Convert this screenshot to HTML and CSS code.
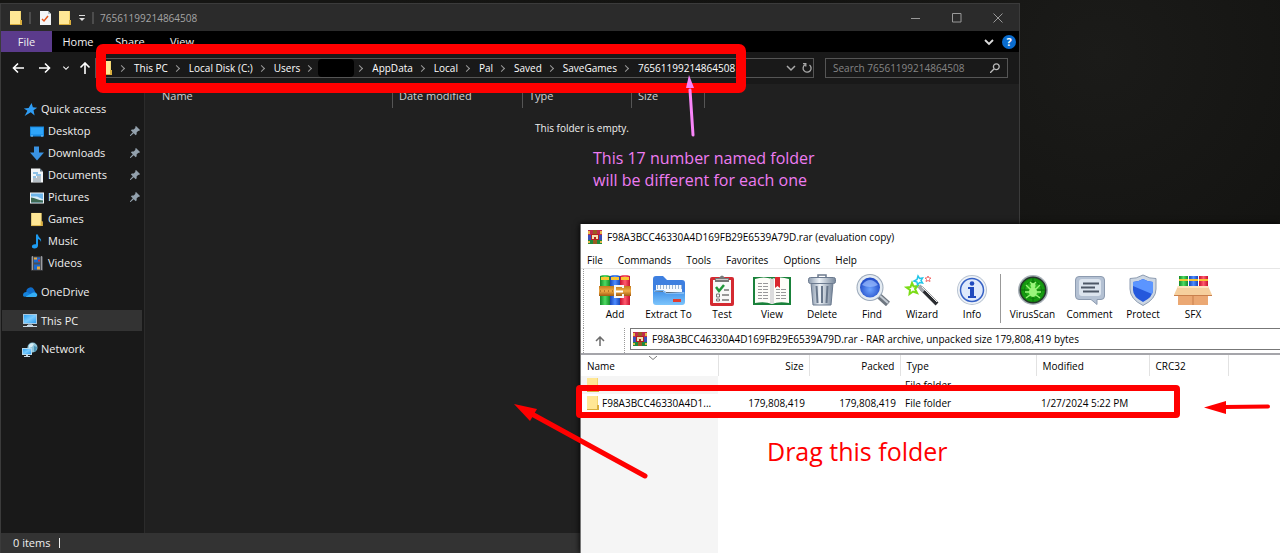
FILE: index.html
```
<!DOCTYPE html>
<html lang="en">
<head>
<meta charset="UTF-8">
<title>Copy the save folder</title>
<link rel="stylesheet" href="styles.css">
</head>
<body>

<!-- shared icons -->
<svg class="defs" aria-hidden="true">
	<defs>
		<linearGradient id="g-blue" x1="0" y1="0" x2="0" y2="1"><stop offset="0" stop-color="#3f8fe8"/><stop offset="1" stop-color="#7cc4fb"/></linearGradient>
		<linearGradient id="g-steel" x1="0" y1="0" x2="1" y2="0"><stop offset="0" stop-color="#8a99ac"/><stop offset=".4" stop-color="#eef3f8"/><stop offset="1" stop-color="#77879b"/></linearGradient>
		<linearGradient id="g-screen" x1="0" y1="0" x2="1" y2="1"><stop offset="0" stop-color="#2fa4f5"/><stop offset=".5" stop-color="#7accff"/><stop offset="1" stop-color="#2b9cf0"/></linearGradient>
		<linearGradient id="g-red" x1="0" y1="0" x2="1" y2="0"><stop offset="0" stop-color="#c8102e"/><stop offset=".5" stop-color="#ff5a6e"/><stop offset="1" stop-color="#c8102e"/></linearGradient>
		<linearGradient id="g-green" x1="0" y1="0" x2="1" y2="0"><stop offset="0" stop-color="#128a28"/><stop offset=".5" stop-color="#4fdb62"/><stop offset="1" stop-color="#128a28"/></linearGradient>
		<linearGradient id="g-book" x1="0" y1="0" x2="1" y2="0"><stop offset="0" stop-color="#1745b8"/><stop offset=".5" stop-color="#4e8cff"/><stop offset="1" stop-color="#1745b8"/></linearGradient>
		<linearGradient id="g-belt" x1="0" y1="0" x2="0" y2="1"><stop offset="0" stop-color="#c47a1e"/><stop offset=".5" stop-color="#f0ab45"/><stop offset="1" stop-color="#a35a10"/></linearGradient>
		<radialGradient id="g-lens" cx=".5" cy=".6" r=".6"><stop offset="0" stop-color="#6ea4ff"/><stop offset="1" stop-color="#1c46c4"/></radialGradient>
		<radialGradient id="g-radar"><stop offset="0" stop-color="#3ed62b"/><stop offset="1" stop-color="#0f8f0c"/></radialGradient>
	</defs>
	<symbol id="folder" viewBox="0 0 14 16"><path fill="#f3d672" d="M1 1h11v9h1v5H1z"/><path fill="#ffe795" d="M1 1h10v14H1z"/><path fill="#d9ae3d" d="M11 10h2v5h-2zM1 14h11v1H1z"/></symbol>
	<symbol id="pin" viewBox="0 0 10 10"><path fill="#93a1ad" d="M6 0l4 4-1 1-.7-.3L6.600 6.400l.1 1.900-1 .9-2-2L.6 9.900 0 9.900 0 9.300l2.800-3L.9 4.400l.9-1 1.900.1 1.800-1.800L5.100 1z"/></symbol>
	<symbol id="rar" viewBox="0 0 16 16"><path fill="#c02a4c" d="M1 1h14v5H1z"/><path fill="#3b4eb8" d="M1 6h14v5H1z"/><path fill="#1f8a3a" d="M1 11h14v4H1z"/><path fill="#e7b84c" d="M1 2h2v3H1zM13 2h2v3h-2zM1 12h2v2H1zM13 12h2v2h-2z"/><path fill="#9a5a22" d="M6 1h4v14H6z"/><path fill="#b5201f" d="M4 5h8v6H4z"/><path fill="#f3dfae" d="M5 6h6v4H9V8H7v2H5z"/></symbol>
	<symbol id="pc" viewBox="0 0 16 15"><path fill="#a9c8de" d="M1 1h14v10H1z"/><path fill="url(#g-screen)" d="M2 2h12v8H2z"/><path fill="#7e93a3" d="M6 11h4v1H6z"/><path fill="#c8d8e4" d="M1 13h14v1H1zM5 12h6v1H5z"/></symbol>
</svg>

<div class="desktop">

<div class="window explorer">
	<div class="ex-title">
		<svg class="i14"><use href="#folder"/></svg>
		<span class="bar"></span>
		<svg class="i14 check" viewBox="0 0 14 16"><path fill="#f4f6f8" d="M2 1h8l3 3v11H2z"/><path fill="#b7c3cc" d="M10 1v3h3z"/><path fill="none" stroke="#e2561e" stroke-width="1.500" d="M4 9l2 2 4-5"/></svg>
		<svg class="i14"><use href="#folder"/></svg>
		<svg class="i8" viewBox="0 0 8 8"><path stroke="#ddd" d="M1 1.500h6"/><path fill="#ddd" d="M1 4h6L4 7z"/></svg>
		<span class="bar"></span>
		<span class="ex-name">76561199214864508</span>
		<button class="win-btn" aria-label="Minimize"><svg viewBox="0 0 10 10"><path d="M0 5.500h9"/></svg></button>
		<button class="win-btn" aria-label="Maximize"><svg viewBox="0 0 10 10"><path d="M.5.5h8.500v8.500H.5z"/></svg></button>
		<button class="win-btn" aria-label="Close"><svg viewBox="0 0 10 10"><path d="M.5.500l9 9M9.500.5l-9 9"/></svg></button>
	</div>
	<div class="ex-tabs">
		<button class="file">File</button>
		<button>Home</button>
		<button>Share</button>
		<button>View</button>
		<svg class="expand" viewBox="0 0 10 10"><path fill="none" stroke="#ddd" stroke-width="1.800" d="M1 3l4 4 4-4"/></svg>
		<button class="help" aria-label="Help">?</button>
	</div>
	<div class="ex-nav">
		<button aria-label="Back"><svg viewBox="0 0 12 12"><path d="M6 1.500L1.500 6 6 10.500M1.500 6H12"/></svg></button>
		<button class="forward" aria-label="Forward"><svg viewBox="0 0 12 12"><path d="M6 1.500L10.500 6 6 10.500M10.500 6H0"/></svg></button>
		<button class="recent" aria-label="Recent locations"><svg viewBox="0 0 12 12"><path d="M2 4l4 4 4-4"/></svg></button>
		<button class="up" aria-label="Up"><svg viewBox="0 0 12 12"><path d="M1.500 5.500L6 1l4.500 4.500M6 1v11"/></svg></button>
		<div class="address">
			<svg class="i14"><use href="#folder"/></svg>
			<ol class="crumbs">
				<li><a href="#">This PC</a></li>
				<li><a href="#">Local Disk (C:)</a></li>
				<li><a href="#">Users</a></li>
				<li class="hidden-name"><span></span></li>
				<li><a href="#">AppData</a></li>
				<li><a href="#">Local</a></li>
				<li><a href="#">Pal</a></li>
				<li><a href="#">Saved</a></li>
				<li><a href="#">SaveGames</a></li>
				<li><a href="#">76561199214864508</a></li>
			</ol>
			<svg class="i10" viewBox="0 0 10 10"><path fill="none" stroke="#aaa" stroke-width="1.500" d="M1 3l4 4 4-4"/></svg>
			<svg class="i10 refresh" viewBox="0 0 10 10"><path fill="none" stroke="#aaa" stroke-width="1.300" d="M3 1.800A4 4 0 1 0 7.500 2M1 .7h2.800v2.800"/></svg>
		</div>
		<label class="search">
			<input type="text" placeholder="Search 76561199214864508" aria-label="Search">
			<svg class="i10" viewBox="0 0 10 10"><path fill="none" stroke="#bbb" stroke-width="1.300" d="M0 10l4-4"/><circle cx="6.300" cy="3.700" r="2.900" fill="none" stroke="#bbb" stroke-width="1.300"/></svg>
		</label>
	</div>
	<div class="ex-body">
		<nav class="side">
			<a href="#" class="top"><svg viewBox="0 0 14 14"><path fill="#2f9df4" d="M8.500 1l1.200 4 4 .3-3.400 2.400 1 4.800-3.600-2.900L2 13l2.600-4.800L1.200 6l4.500-.5z"/></svg>Quick access</a>
			<a href="#"><svg viewBox="0 0 16 14"><path fill="#1688e0" d="M1 2h14v10H1z"/><path fill="#2ea5fa" d="M2 3h12v7H2z"/><path fill="#8fd1ff" d="M2 11h2v1H2zM12 11h2v1h-2z"/></svg>Desktop<svg class="pin"><use href="#pin"/></svg></a>
			<a href="#"><svg viewBox="0 0 16 14"><path fill="#3a93e3" d="M5 0h5v6h5l-7 8-7-8h4z"/></svg>Downloads<svg class="pin"><use href="#pin"/></svg></a>
			<a href="#"><svg viewBox="0 0 16 14"><path fill="#f2f5f7" d="M2 0h9l3 3v11H2z"/><path fill="#5e7485" d="M11 0v3h3z"/><path stroke="#2e8fd6" d="M4 4.500h5M7 6.500h5M4 8.500h3"/><path stroke="#7b8a96" d="M8 8.500h4M4 10.500h8M4 12.500h8"/></svg>Documents<svg class="pin"><use href="#pin"/></svg></a>
			<a href="#"><svg viewBox="0 0 16 14"><path fill="#f2f5f7" d="M1 2h14v11H1z"/><path fill="#6db5ea" d="M2 3h12v9H2z"/><path fill="#d8ecf8" d="M2 6h6l6 3v1H2z"/><path fill="#3f6a54" d="M2 7c4 0 7 3 12 3v2H2z"/></svg>Pictures<svg class="pin"><use href="#pin"/></svg></a>
			<a href="#"><svg><use href="#folder"/></svg>Games</a>
			<a href="#"><svg viewBox="0 0 16 14"><path fill="#1e9bf0" d="M7 0h2c0 3 4 3.500 3 7.500-.5-2-1.500-2.500-3-3V11c0 2-1.500 3-3.500 3S2.500 13 3 11.500 5 9.300 7 9.800z"/></svg>Music</a>
			<a href="#"><svg viewBox="0 0 16 14"><path fill="#4c4f55" d="M2 0h12v14H2z"/><path fill="#1b6ad0" d="M5 1h6v5H5zM5 8h6v5H5z"/><path fill="#e9a73c" d="M5 1h3v2H5zM8 10h3v3H8z"/><path fill="#c33" d="M9 3h2v2H9z"/><path stroke="#eee" stroke-dasharray="1 1" d="M3.500 0v14M12.500 0v14"/></svg>Videos</a>
			<a href="#" class="top group"><svg viewBox="0 0 16 14"><path fill="#0f6cc9" d="M5 8a4 4 0 0 1 7-4l3 6H3z"/><path fill="#1482dc" d="M1 9.500C1 7 4 6 6 7l6 4H3C2 11.500 1 11 1 9.500z"/><path fill="#34aef5" d="M3 11.500L11 7c3-.5 5 1.500 4 3.500-.4.800-1 1-2 1z"/></svg>OneDrive</a>
			<a href="#" class="top group active"><svg><use href="#pc"/></svg>This PC</a>
			<a href="#" class="top group"><svg viewBox="0 0 16 15"><circle cx="10.500" cy="5.500" r="5" fill="#8cc3d8"/><path fill="#d5edf4" d="M7 3c2-2 4-2 5-1l-2 3-3 1z"/><path fill="#4c94b6" d="M12 4l3 1-1 4-2 1z"/><path fill="#b6d8ec" d="M0 6h10v7H0z"/><path fill="url(#g-screen)" d="M1 7h8v5H1z"/><path fill="#c8d8e4" d="M2 14h6v1H2zM4 13h2v1H4z"/></svg>Network</a>
		</nav>
		<main class="files">
			<div class="cols">
				<span class="c-name">Name</span>
				<span class="c-date">Date modified</span>
				<span class="c-type">Type</span>
				<span class="c-size">Size</span>
			</div>
			<p class="empty">This folder is empty.</p>
		</main>
	</div>
	<div class="status"><span>0 items</span></div>
</div>

<div class="window winrar">
	<div class="wr-title"><svg class="i16"><use href="#rar"/></svg>F98A3BCC46330A4D169FB29E6539A79D.rar (evaluation copy)</div>
	<div class="wr-menu">
		<button>File</button>
		<button>Commands</button>
		<button>Tools</button>
		<button>Favorites</button>
		<button>Options</button>
		<button>Help</button>
	</div>
	<div class="wr-tools">
		<button><svg viewBox="0 0 38 32"><path fill="url(#g-green)" d="M4 2q5-2 10 0v29H4z"/><path fill="url(#g-book)" d="M14 2q5-2 10 0v29H14z"/><path fill="url(#g-red)" d="M24 2q5-2 10 0v29H24z"/><path stroke="#f7c531" stroke-width="3" d="M5 4.500h8M15 4.500h8M25 4.500h8"/><path fill="url(#g-belt)" d="M3 12h32v10H3z"/><path stroke="#8a4b0c" stroke-dasharray="1 3" d="M4 17h14"/><path fill="none" stroke="#f5f5f5" stroke-width="2" d="M27 14v-2h-8v11h8v-3"/><path stroke="#fff" stroke-width="2" d="M20 17.500h7"/></svg>Add</button>
		<button class="wide"><svg viewBox="0 0 38 32"><path fill="#3d7fe0" d="M3 27V5q0-3 3-3h7l4 4h15q3 0 3 3v18z"/><path fill="#f5f9ff" d="M6 11h26v8H6z"/><path stroke="#9ab4d2" stroke-dasharray="1 2" stroke-width="4" d="M7 13h25"/><path fill="url(#g-blue)" d="M3 16h10l3 2h19v10q0 3-3 3H6q-3 0-3-3z"/><path stroke="#b5dcff" d="M4 17h9l3 2h18"/><path fill="#e33b2e" d="M23 25h8v3h-8z"/></svg>Extract To</button>
		<button><svg viewBox="0 0 38 32"><rect x="7" y="3" width="24" height="29" rx="2" fill="#d42a31"/><path fill="#f8f8f8" d="M10 6h18v23H10z"/><path fill="#777" d="M12 4h4q3-5 6 0h4v4H12z"/><path fill="#ccc" d="M13 5h12v1H13z"/><path fill="none" stroke="#20963a" stroke-width="2.500" d="M13 13l3 4 5-6"/><path stroke="#777" stroke-width="1.500" d="M21 16h5M19 21h7M19 26h7"/><path fill="none" stroke="#777" d="M13.500 20h3v3h-3zM13.500 25h3v2h-3z"/></svg>Test</button>
		<button><svg viewBox="0 0 38 32"><path fill="#19813a" d="M0 3h38v28H0z"/><path fill="#fdfdf8" d="M2 5q9-3 17 0 8-3 17 0v24q-10-2-17 1-7-3-17-1z"/><path fill="#ddd" d="M17 4l2 1 2-1v25l-2 1-2-1z"/><path stroke="#999" stroke-dasharray="4 1 6 1" d="M5 9.500h10M5 12.500h10M5 15.500h10M5 18.500h10M5 21.500h10M5 24.500h10M23 15.500h10M23 18.500h10M23 21.500h10M23 24.500h10"/><path fill="#d9272e" d="M22 3h5v11l-2.500-2L22 14z"/></svg>View</button>
		<button><svg viewBox="0 0 38 32"><path fill="none" stroke="#6d7b8e" stroke-width="1.500" d="M15 4V1h8v3"/><path fill="url(#g-steel)" stroke="#6b7a8f" d="M8 9h22l-2 22H10z"/><path stroke="#68778b" stroke-width="2" d="M13.500 12l1 17M19 12v17M24.500 12l-1 17"/><rect x="5.500" y="3.500" width="27" height="6" rx="2" fill="url(#g-steel)" stroke="#6b7a8f"/></svg>Delete</button>
		<button><svg viewBox="0 0 38 32"><path stroke="#6e7680" stroke-width="6" d="M25 21l10 9"/><path stroke="#c3cad2" stroke-width="2" d="M25 20l10 9"/><circle cx="17" cy="13.500" r="13.500" fill="#9ba9ba"/><circle cx="17" cy="13.500" r="12.500" fill="#e4ebf2"/><circle cx="17" cy="13.500" r="10" fill="url(#g-lens)"/><path fill="#9dbdff" opacity=".7" d="M9 11q8-10 16 0-8 4-16 0z"/></svg>Find</button>
		<button><svg viewBox="0 0 38 32"><path stroke="#2b2d31" stroke-width="4" d="M18 14l16 16"/><path stroke="#a3a7ae" stroke-width="4" d="M16 12l5 5"/><path stroke="#eee" d="M19 13l15 15"/><path fill="none" stroke="#7bdc16" stroke-width="2" d="M9 9l1.500 3.500 4-.5-2.500 3 2 4-4-1.500-3.500 2.500.5-4-3.500-2.500 4-.5z"/><path fill="none" stroke="#22c5e8" stroke-width="1.500" d="M15 2l1.500 2.500 3-.5-1.500 2.500 1.500 2.500-3-.5-2 2.500-.5-3-3-1 3-1.500z"/><path fill="none" stroke="#f06a6a" d="M25 2l1 2h2l-1.500 1.500.5 2-2-1-2 1 .5-2L22 4h2z"/></svg>Wizard</button>
		<button><svg viewBox="0 0 38 32"><circle cx="19" cy="16" r="15" fill="#b9c4d2"/><circle cx="19" cy="16" r="14" fill="#eff3f8"/><circle cx="19" cy="16" r="11.500" fill="#dfe9fb" stroke="#3560c5" stroke-width="1.500"/><circle cx="19" cy="9.500" r="2.300" fill="#1f49be"/><path fill="#1f49be" d="M15 13h6v9h2v2h-8v-2h2v-7h-2z"/></svg>Info</button>
		<span class="sep"></span>
		<button class="wide"><svg viewBox="0 0 38 32"><circle cx="19" cy="16" r="15" fill="#a8b0b8"/><circle cx="19" cy="16" r="13.500" fill="#24352a"/><circle cx="19" cy="16" r="12" fill="url(#g-radar)"/><path stroke="#0a6a08" d="M19 4v24M7 16h24"/><circle cx="19" cy="16" r="8.500" fill="none" stroke="#0c7b0a"/><ellipse cx="19" cy="18" rx="4" ry="5" fill="#9bf57c"/><circle cx="19" cy="11.500" r="2.500" fill="#9bf57c"/><path fill="none" stroke="#9bf57c" stroke-width="1.300" d="M12 11l4 4M26 11l-4 4M11 18h16M12 24l4-3M26 24l-4-3M16 8l2 2M22 8l-2 2"/></svg>VirusScan</button>
		<button class="wide"><svg viewBox="0 0 38 32"><path fill="#b4c1d3" stroke="#8d9bb0" d="M8 2.500h22q3.500 0 3.500 3.500v16q0 3.500-3.500 3.500h-4v5l-6-5H8q-3.500 0-3.500-3.500V6q0-3.500 3.500-3.500z"/><rect x="8" y="5" width="22" height="17" rx="3" fill="#dce4ee"/><path stroke="#4d5766" stroke-width="2" d="M12 9.500h16M10 13.500h14M12 17.500h16"/></svg>Comment</button>
		<button><svg viewBox="0 0 38 32"><path fill="#ccd6e2" stroke="#8c9bb0" d="M19 1q7 4 13 3.500V15q0 10-13 16.500Q6 25 6 15V4.500Q12 5 19 1z"/><path fill="#2458dc" d="M19 5q5 3 10 3v8q0 7-10 12Q9 23 9 16V8q5 0 10-3z"/><path fill="#5b95ff" d="M19 5q5 3 10 3v8q0 2-1 4L9 12V8q5 0 10-3z"/></svg>Protect</button>
		<button><svg viewBox="0 0 38 32"><path fill="url(#g-green)" d="M5 2h9v12H5z"/><path fill="url(#g-book)" d="M15 2h9v12h-9z"/><path fill="url(#g-red)" d="M25 2h9v12h-9z"/><path stroke="#f7c531" stroke-width="2" d="M5 6h9M15 6h9M25 6h9"/><path fill="#eba873" d="M4 18h30v13H4z"/><path fill="#f6cf9d" d="M4 12h30l4 9H0z"/><path fill="#ffe3bd" d="M4 12h30l1 2H3z"/><path stroke="#c97f4c" d="M0 21.500h38M19 22v9"/></svg>SFX</button>
	</div>
	<div class="wr-path">
		<button aria-label="Up one folder"><svg class="i10" viewBox="0 0 10 10"><path fill="none" stroke="#6c6c6c" stroke-width="1.500" d="M1 5l4-4 4 4M5 1v9"/></svg></button>
		<label class="wr-address">
			<svg class="i16"><use href="#rar"/></svg>
			<input type="text" aria-label="Archive path" value="F98A3BCC46330A4D169FB29E6539A79D.rar - RAR archive, unpacked size 179,808,419 bytes">
		</label>
	</div>
	<div class="wr-list">
		<table>
			<colgroup><col class="w-name"><col class="w-num"><col class="w-num"><col class="w-type"><col class="w-mod"><col class="w-crc"><col></colgroup>
			<thead>
				<tr><th>Name<svg class="sort" viewBox="0 0 8 4"><path fill="none" stroke="#777" d="M0 0l4 3.500L8 0"/></svg></th><th class="num">Size</th><th class="num">Packed</th><th>Type</th><th>Modified</th><th>CRC32</th><th></th></tr>
			</thead>
			<tbody>
				<tr><td><div class="entry"><svg class="i14"><use href="#folder"/></svg></div></td><td></td><td></td><td>File folder</td><td></td><td></td><td></td></tr>
				<tr class="picked"><td><div class="entry"><svg class="i14"><use href="#folder"/></svg>F98A3BCC46330A4D1...</div></td><td class="num">179,808,419</td><td class="num">179,808,419</td><td>File folder</td><td>1/27/2024 5:22 PM</td><td></td><td></td></tr>
			</tbody>
		</table>
	</div>
</div>

<!-- marks drawn over the windows -->
<svg class="marks" aria-hidden="true">
	<rect x="101" y="49" width="640" height="39" rx="2" fill="none" stroke="#f00" stroke-width="10"/>
	<rect x="579" y="388" width="598" height="27" rx="1" fill="none" stroke="#f00" stroke-width="6"/>
	<path stroke="#f00" stroke-width="5" stroke-linecap="round" d="M645 476L530 413"/>
	<path fill="#f00" d="M514 404l23 5-7 12z"/>
	<path stroke="#f00" stroke-width="4" stroke-linecap="round" d="M1268 406.500L1224 407"/>
	<path fill="#f00" d="M1204 407.500l22-6.500v13z"/>
	<path stroke="#f985f9" stroke-width="3" stroke-linecap="round" d="M693 135L690 90"/>
	<path fill="#f985f9" d="M689 75l5 13h-8z"/>
</svg>
<p class="note pink">This 17 number named folder<br>will be different for each one</p>
<p class="note red">Drag this folder</p>

</div>
</body>
</html>
```
FILE: styles.css
```
* { box-sizing: border-box; }

body { margin: 0; font-family: "Open Sans", "Noto Sans", sans-serif; font-size: 10px; line-height: 16px; }

button, input { font: inherit; color: inherit; background: none; border: 0; padding: 0; margin: 0; }
a { color: inherit; text-decoration: none; }
p, ol { margin: 0; padding: 0; }
svg { flex: none; display: block; }

.defs { position: absolute; width: 0; height: 0; }
.i8 { width: 8px; height: 8px; }
.i10 { width: 10px; height: 10px; }
.i14 { width: 14px; height: 16px; }
.i16 { width: 16px; height: 16px; }

.desktop { position: relative; height: 100vh; overflow: hidden;
	background: radial-gradient(circle at 86% 10%, #1b1b19, #121210 25%, #151513 60%); }

.window { position: absolute; display: flex; flex-direction: column; bottom: 0; }

/* file explorer */
.explorer { left: 0; top: 3px; right: 260px; background: #202020; color: #f0f0f0;
	border: 1px solid #3b3b3b; border-bottom: 0; }

.ex-title { display: flex; align-items: center; height: 27px; gap: 6px; padding-left: 8px; padding-right: 4px; background: #2b2b2b; }
.ex-name { flex: 1; color: #a5a5a5; }
.bar { width: 2px; height: 12px; background: #4c4c4c; }
.check { margin-left: 1px; }
.win-btn { width: 35px; height: 27px; display: flex; align-items: center; justify-content: center; }
.win-btn svg { width: 10px; height: 10px; fill: none; stroke: #999; }

.ex-tabs { display: flex; align-items: center; height: 21px; background: #000; padding-right: 3px; }
.ex-tabs button { width: 52px; height: 21px; font-size: 11px; }
.ex-tabs .file { background: #5b3b8c; width: 51px; }
.ex-tabs .expand { width: 10px; height: 10px; margin-left: auto; margin-right: 8px; }
.ex-tabs .help { width: 14px; height: 14px; border-radius: 50%; background: #0a6cce; color: #fff; line-height: 14px; font-weight: bold; }

.ex-nav { display: flex; align-items: center; height: 32px; background: #191919; padding: 0 11px 0 10px; }
.ex-nav button { width: 14px; margin-right: 13px; }
.ex-nav button svg { width: 12px; height: 12px; margin: auto; fill: none; stroke: #fff; stroke-width: 1.6; }
.ex-nav .forward { margin-right: 8px; }
.ex-nav .recent { width: 12px; margin-right: 7px; }
.ex-nav .up { width: 12px; margin-right: 4px; }
.ex-nav .recent svg { width: 8px; height: 8px; }

.address { flex: 1; display: flex; align-items: center; height: 20px; padding: 0 1px 0 3px; border: 1px solid #555; }
.address .refresh { margin-left: 6px; }
.crumbs { flex: 1; display: flex; list-style: none; color: #fff; }
.crumbs li { display: flex; align-items: center; }
.crumbs li::before { content: ""; width: 4px; height: 4px; margin: 0 10px 0 6px; border: solid #999; border-width: 1px 1px 0 0; transform: rotate(45deg); }
.hidden-name span { width: 36px; height: 18px; margin: 0 -3px; border-radius: 4px; background: #000; }

.search { display: flex; align-items: center; width: 183px; height: 20px; margin-left: 11px; padding: 0 7px; border: 1px solid #555; }
.search input { flex: 1; min-width: 0; outline: 0; }
.search input::placeholder { color: #858585; opacity: 1; }

.ex-body { flex: 1; display: flex; min-height: 0; }
.side { width: 144px; padding: 14px 2px 0 1px; background: #191919; border-right: 1px solid #2b2b2b; }
.side a { display: flex; align-items: center; height: 22px; gap: 3px; padding-left: 27px; }
.side a.top { padding-left: 20px; }
.side a.group { margin-top: 7px; }
.side a.active { height: 21px; background: #333; }
.side a svg { width: 16px; height: 15px; }
.side a .pin { width: 10px; height: 10px; margin-left: auto; margin-right: 2px; }

.files { flex: 1; }
.cols { display: flex; height: 24px; color: #d0d0d0; line-height: 24px; }
.cols span { border-right: 1px solid #555; padding-left: 6px; }
.cols .c-name { width: 248px; padding-left: 17px; }
.cols .c-date { width: 130px; }
.cols .c-type { width: 109px; }
.cols .c-size { width: 73px; }
.empty { padding-top: 12px; text-align: center; }

.status { display: flex; align-items: center; height: 20px; padding-left: 12px; background: #333; }
.status span { padding-right: 9px; border-right: 1px solid #eee; line-height: 10px; }

.side, .cols, .status { font-size: 11px; }

/* winrar */
.winrar { left: 580px; top: 224px; right: 0; background: #fff; color: #000; border-left: 1px solid #777; box-shadow: 0 0 6px #000; }

.wr-title { display: flex; align-items: center; gap: 4px; height: 26px; padding-left: 6px; }
.wr-menu { display: flex; gap: 15px; height: 19px; padding-left: 6px; padding-top: 2px; border-bottom: 1px solid #e6e6e6; }
.wr-tools { display: flex; height: 59px; padding: 5px 0 0 6px; margin-left: 2px; border-left: 1px dotted #999; }
.wr-tools button { width: 50px; display: flex; flex-direction: column; align-items: center; }
.wr-tools .wide { width: 57px; }
.wr-tools svg { width: 38px; height: 32px; }
.wr-tools .sep { width: 1px; height: 49px; margin: 0 3px; background: #999; }

.wr-path { display: flex; height: 25px; margin-left: 2px; border-left: 1px dotted #999; }
.wr-path button { width: 41px; padding-left: 11px; border-right: 1px dotted #999; }
.wr-address { flex: 1; display: flex; align-items: center; gap: 4px; height: 22px; margin-left: 5px; padding-left: 1px; border: 1px solid #777; border-right: 0; }
.wr-address input { flex: 1; outline: 0; }

.wr-list { flex: 1; border-top: 2px solid #a5a5aa; background: linear-gradient(to right, #f5f5f5 137px, #fff 137px); }
.wr-list table { width: 100%; table-layout: fixed; border-collapse: collapse; }
.w-name { width: 137px; }
.w-num { width: 91px; }
.w-type { width: 136px; }
.w-mod { width: 113px; }
.w-crc { width: 79px; }
.wr-list th { height: 21px; padding: 0 5px 0 6px; text-align: left; font-weight: normal; background: #fff; border-right: 1px solid #e2e2e2; position: relative; }
.wr-list th:last-child { border: 0; }
.wr-list td { height: 18px; padding: 0 4px 0 5px; white-space: nowrap; }
.wr-list th.num, .wr-list td.num { text-align: right; }
.entry { display: flex; align-items: center; gap: 2px; }
.picked { background: #fff; }
.wr-list .sort { position: absolute; top: 1px; left: 50%; width: 8px; height: 4px; }

/* notes */
.marks { position: absolute; left: 0; top: 0; width: 100%; height: 100%; pointer-events: none; }
.note { position: absolute; }
.pink { left: 593px; top: 147px; font-size: 16px; line-height: 22px; color: #ee7cf2; }
.red { left: 767px; top: 435px; font-size: 25px; line-height: 32px; color: #f00; }
```
